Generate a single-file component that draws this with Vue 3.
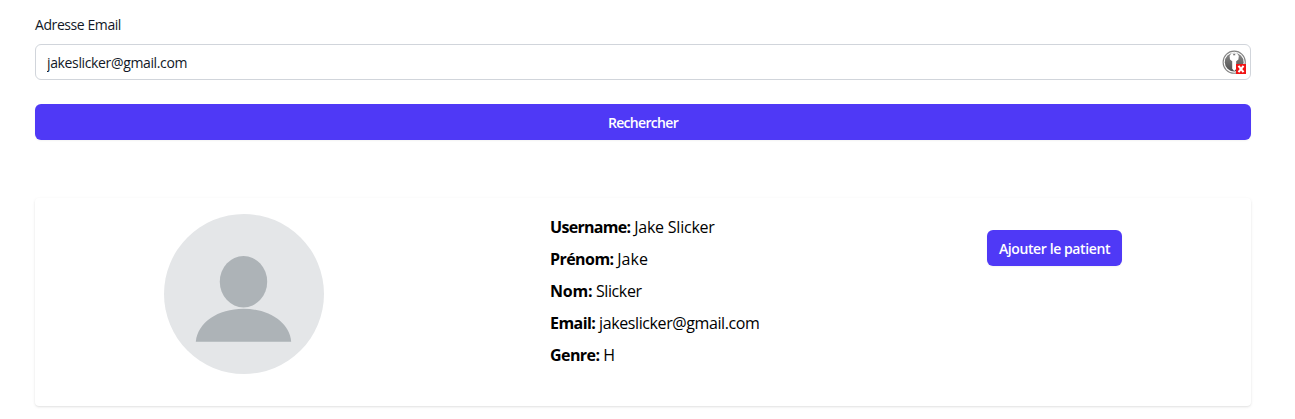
<script setup>
import { ref } from 'vue'

const email = ref('jakeslicker@gmail.com')
const fields = [
  { key: 'username', label: 'Username:', value: 'Jake Slicker' },
  { key: 'prenom', label: 'Prénom:', value: 'Jake' },
  { key: 'nom', label: 'Nom:', value: 'Slicker' },
  { key: 'email', label: 'Email:', value: 'jakeslicker@gmail.com' },
  { key: 'genre', label: 'Genre:', value: 'H' },
]
</script>

<template>
  <main class="page">
    <form class="search" @submit.prevent>
      <label class="label" for="email"><span>Adresse Email</span></label>
      <div class="field">
        <input id="email" v-model="email" class="input" type="text" />
        <svg class="key" width="26" height="26" viewBox="0 0 26 26" aria-hidden="true">
          <defs>
            <linearGradient id="disc" x1="0" y1="0" x2="0" y2="1">
              <stop offset="0" stop-color="#8b8b8b" />
              <stop offset="1" stop-color="#4d4d4d" />
            </linearGradient>
          </defs>
          <circle cx="12.2" cy="12.2" r="11.1" fill="#fff" stroke="#858585" stroke-width="1.1" />
          <circle cx="12.2" cy="12.2" r="9.4" fill="url(#disc)" />
          <path d="M9.4 3.2 L7.6 6 L8 9.4 L10.2 11.2 V18.8 L12.2 21 L14.2 19 V11.2 L16.4 9.4 L16.8 6 L15 3.2 Z" fill="#fff" />
          <path d="M11.2 4.6 H13.2" stroke="#777" stroke-width="1.4" />
          <rect x="14" y="14" width="10" height="10" fill="#f01414" />
          <path d="M16.5 15.8 L21.5 22.2 M21.5 15.8 L16.5 22.2" stroke="#fff" stroke-width="2.1" />
        </svg>
      </div>
      <button class="btn wide" type="submit"><span class="search-text">Rechercher</span></button>
    </form>

    <section class="card">
      <svg class="avatar" width="160" height="160" viewBox="0 0 160 160" role="img">
        <circle cx="80" cy="80" r="80" fill="#e4e6e8" />
        <ellipse cx="79.5" cy="67.7" rx="23.7" ry="25.7" fill="#adb3b7" />
        <path d="M31.8 127.7 C33.5 108.5 54 94.8 79.5 94.8 S125.5 108.5 127.2 127.7 Z" fill="#adb3b7" />
      </svg>
      <div class="infos">
        <p v-for="f in fields" :key="f.key" :class="['info', f.key]">
          <strong>{{ f.label }}</strong> <span>{{ f.value }}</span>
        </p>
      </div>
      <button class="btn add" type="button"><span class="add-text">Ajouter le patient</span></button>
    </section>
  </main>
</template>

<style>
body {
  background: #fff;
}
</style>

<style scoped>
.page {
  box-sizing: border-box;
  height: 419px;
  padding: 13px 44px 0 35px;
  overflow: hidden;
  font-family: "Open Sans", "Noto Sans", sans-serif;
  color: #000;
}
.label {
  display: block;
  height: 24px;
  font-size: 14px;
  line-height: 24px;
  letter-spacing: -0.42px;
  color: #111827;
}
.field {
  position: relative;
  margin-top: 7px;
}
.input {
  display: block;
  box-sizing: border-box;
  width: 100%;
  height: 36px;
  padding: 0 40px 0 11px;
  border: 1px solid #d1d5db;
  border-radius: 6px;
  outline: none;
  background: #fff;
  font-family: inherit;
  font-size: 14px;
  letter-spacing: -0.36px;
  color: #111827;
}
.key {
  position: absolute;
  top: 6px;
  right: 3px;
}
.btn {
  display: flex;
  align-items: center;
  justify-content: center;
  box-sizing: border-box;
  height: 36px;
  padding: 2px 0 0;
  border: 0;
  border-radius: 6px;
  background: #4f39f6;
  box-shadow: 0 1px 2px rgba(0, 0, 0, 0.05);
  font-family: inherit;
  font-size: 14px;
  font-weight: 600;
  line-height: 24px;
  white-space: nowrap;
  color: #fff;
}
.wide {
  width: 100%;
  margin-top: 24px;
}
.search-text {
  letter-spacing: -0.68px;
}
.card {
  display: flex;
  justify-content: space-around;
  align-items: flex-start;
  box-sizing: border-box;
  height: 208px;
  margin-top: 58px;
  padding: 16px;
  border-radius: 4px;
  background: #fff;
  box-shadow: 0 1px 3px rgba(0, 0, 0, 0.1), 0 1px 2px -1px rgba(0, 0, 0, 0.1);
}
.avatar {
  flex: none;
}
.infos {
  width: 211px;
  padding-top: 1px;
}
.info {
  margin: 0 0 8px;
  font-size: 16px;
  line-height: 24px;
  letter-spacing: -0.4px;
  white-space: nowrap;
}
.username strong {
  letter-spacing: -0.7px;
}
.username span {
  letter-spacing: -0.22px;
}
.prenom strong,
.email strong,
.genre strong {
  letter-spacing: -0.56px;
}
.prenom span {
  letter-spacing: 0;
}
.nom strong {
  letter-spacing: -0.25px;
}
.add {
  width: 135px;
  margin-top: 16px;
}
.add-text {
  letter-spacing: -0.4px;
}
</style>
